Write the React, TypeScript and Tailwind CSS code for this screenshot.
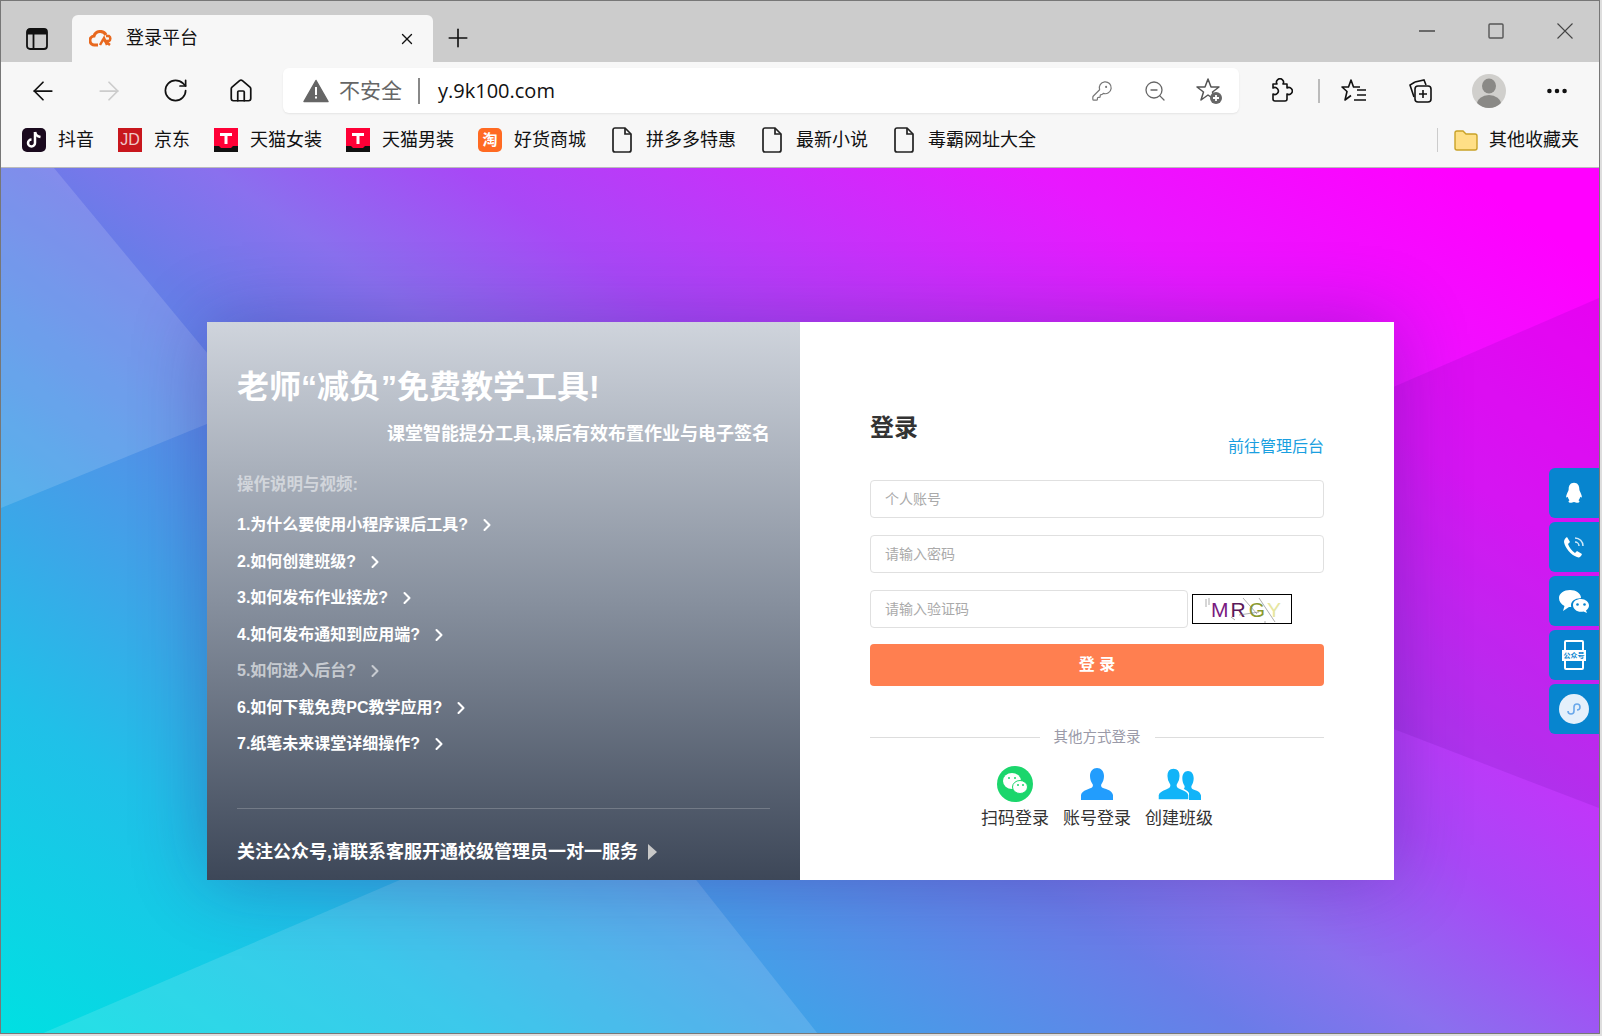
import React from "react";
import { ArrowLeft, ArrowRight, RotateCw, Home, Plus, X, KeyRound, ZoomOut, MoreHorizontal, ChevronRight } from "lucide-react";

const cjk = "font-['Liberation_Sans','Noto_Sans_CJK_SC',sans-serif]";

function Bm({ icon, label, w }: { icon: React.ReactNode; label: string; w: string }) {
  return (
    <div className={`flex items-center gap-[12px] ${w}`}>
      <span className="flex h-[26px] w-[24px] items-center justify-center">{icon}</span>
      <span className="text-[18px] leading-none text-[#111]">{label}</span>
    </div>
  );
}

function Tmall() {
  return (
    <svg width="24" height="24" viewBox="0 0 24 24">
      <rect width="24" height="24" fill="#ff0036" />
      <path d="M0 18h5l2 2h10l2-2h5v6H0z" fill="#111" />
      <path d="M6 5h12v3h-4.500v8h-3V8H6z" fill="#fff" />
    </svg>
  );
}
function Doc() {
  return (
    <svg width="24" height="26" viewBox="0 0 24 26" fill="none" stroke="#222" strokeWidth="1.700">
      <path d="M3 3a2 2 0 0 1 2-2h10l6 6v16a2 2 0 0 1-2 2H5a2 2 0 0 1-2-2z" />
      <path d="M15 1v6h6" />
    </svg>
  );
}

const links = [
  "1.为什么要使用小程序课后工具?",
  "2.如何创建班级?",
  "3.如何发布作业接龙?",
  "4.如何发布通知到应用端?",
  "5.如何进入后台?",
  "6.如何下载免费PC教学应用?",
  "7.纸笔未来课堂详细操作?",
];

function Person({ color, w = 32, h = 32, outline = false }: { color: string; w?: number; h?: number; outline?: boolean }) {
  return (
    <svg width={w} height={h} viewBox="0 0 32 32" fill={color} stroke={outline ? "#fff" : "none"} strokeWidth={outline ? 1.500 : 0} preserveAspectRatio="none">
      <path d="M16 0c4 0 7 3 7 8 0 3-1 6-2.500 8-.7 1-.5 2.500.5 3.500 2 1.500 10 2 11 7.500v5H0v-5c1-5 9-6 11-7.500 1-1 1.200-2.500.5-3.500C10 14 9 11 9 8c0-5 3-8 7-8z" />
    </svg>
  );
}

function SideBtn({ children }: { children: React.ReactNode }) {
  return <div className="flex h-[50px] w-[50px] items-center justify-center rounded-l-[6px] bg-[#0785cf]">{children}</div>;
}

export default function App() {
  return (
    <div className="h-[1036px] w-[1602px] bg-[#dedede]">
      <div className={`flex h-[1034px] w-[1600px] flex-col overflow-hidden border border-[#777] bg-[#ccc] ${cjk}`}>
        {/* tab strip */}
        <div className="flex h-[61px] shrink-0 items-end bg-[#cccccc]">
          <div className="flex h-[47px] w-[71px] items-center justify-center">
            <svg width="22" height="22" viewBox="0 0 22 22" fill="none" stroke="#111" strokeWidth="1.800">
              <rect x="1" y="1" width="20" height="20" rx="3" />
              <path d="M1 4h20" strokeWidth="5" />
              <path d="M7.500 6v15" />
            </svg>
          </div>
          <div className="flex h-[47px] w-[361px] items-center rounded-t-[6px] bg-[#f7f7f7] pr-[17px] pl-[17px]">
            <svg width="24" height="18" viewBox="0 0 24 18" fill="none" stroke="#e8681e" strokeWidth="3">
              <path d="M9 15H6a4.500 4.500 0 0 1-1-9 6.500 6.500 0 0 1 12-1" />
              <path d="M11 15l4-7 3 7" strokeWidth="2.500" />
              <path d="M17 6h3a3 3 0 0 1 0 5h-4l5 4" strokeWidth="2.500" />
            </svg>
            <span className="mb-[1px] ml-[13px] flex-1 text-[18px] leading-none text-[#111]">登录平台</span>
            <X size={18} strokeWidth={1.800} className="text-[#111]" />
          </div>
          <div className="flex h-[47px] w-[50px] items-center justify-center pb-[2px]">
            <Plus size={30} strokeWidth={1.300} className="text-[#111]" />
          </div>
          <div className="flex-1" />
          <div className="flex h-[61px] items-start pt-[22px] text-[#333]">
            <div className="flex w-[69px] justify-center">
              <svg width="16" height="16" viewBox="0 0 16 16" stroke="#333" strokeWidth="1.300"><path d="M0 8h16" /></svg>
            </div>
            <div className="flex w-[69px] justify-center">
              <svg width="16" height="16" viewBox="0 0 16 16" fill="none" stroke="#555" strokeWidth="1.400"><rect x="1" y="1" width="14" height="14" rx="1" /></svg>
            </div>
            <div className="flex w-[69px] justify-center">
              <svg width="16" height="16" viewBox="0 0 16 16" stroke="#444" strokeWidth="1.100"><path d="M0.500 0.500l15 15M15.500 0.500l-15 15" /></svg>
            </div>
          </div>
        </div>

        {/* toolbar */}
        <div className="flex h-[57px] shrink-0 items-center bg-[#f7f7f7]">
          <div className="flex w-[282px] items-center text-[#111]">
            <div className="flex w-[84px] justify-center"><ArrowLeft size={30} strokeWidth={1.400} /></div>
            <div className="flex w-[48px] justify-center"><ArrowRight size={30} strokeWidth={1.400} className="text-[#ccc]" /></div>
            <div className="flex w-[84px] justify-center"><RotateCw size={27} strokeWidth={1.500} /></div>
            <div className="flex w-[48px] justify-center"><Home size={26} strokeWidth={1.600} /></div>
          </div>
          <div className="flex h-[45px] w-[956px] items-center rounded-[6px] bg-white pr-[16px] pl-[20px] shadow-[0_1px_2px_rgba(0,0,0,0.08)]">
            <svg width="26" height="24" viewBox="0 0 26 24">
              <path d="M13 1.500l12 21H1z" fill="#666" stroke="#666" strokeWidth="1.500" strokeLinejoin="round" />
              <path d="M12 8h2v8h-2zM12 17.500h2v2h-2z" fill="#fff" />
            </svg>
            <span className="ml-[10px] text-[21px] leading-none text-[#666]">不安全</span>
            <span className="mr-[18px] ml-[16px] h-[26px] w-[2px] bg-[#888]" />
            <span className="font-['Open_Sans',sans-serif] text-[20px] leading-none text-[#111]">y.9k100.com</span>
            <div className="flex-1" />
            <KeyRound size={22} strokeWidth={1.300} className="mr-[30px] text-[#777]" />
            <ZoomOut size={24} strokeWidth={1.300} className="mr-[28px] text-[#666]" />
            <svg width="28" height="30" viewBox="0 0 28 30" fill="none" stroke="#555" strokeWidth="1.500">
              <path d="M13 3l3 8h8l-6.500 5 2.500 8-7-5-7 5 2.500-8L2 11h8z" strokeLinejoin="round" />
              <circle cx="21" cy="22" r="6" fill="#666" stroke="none" />
              <path d="M21 19v6M18 22h6" stroke="#fff" strokeWidth="1.800" />
            </svg>
          </div>
          <div className="flex flex-1 items-center text-[#111]">
            <div className="flex w-[79px] justify-center pl-[3px]">
              <svg width="26" height="26" viewBox="0 0 26 26" fill="none" stroke="#111" strokeWidth="1.600">
                <path d="M6 6h4a3.500 3.500 0 1 1 6 0h4v4a3.500 3.500 0 1 1 0 6v5a2 2 0 0 1-2 2H8a2 2 0 0 1-2-2v-5a3.500 3.500 0 1 0 0-6z" strokeLinejoin="round" />
              </svg>
            </div>
            <span className="h-[24px] w-[2px] bg-[#bbb]" />
            <div className="flex w-[68px] justify-center">
              <svg width="28" height="28" viewBox="0 0 28 28" fill="none" stroke="#111" strokeWidth="1.600">
                <path d="M20 10h-6.500L11 3 8.500 10H2l5 4.500L5 23l6-4.500" strokeLinejoin="round" />
                <path d="M17 13h9M17 18h9M14 23h12" />
              </svg>
            </div>
            <div className="flex w-[64px] justify-center">
              <svg width="28" height="28" viewBox="0 0 28 28" fill="none" stroke="#111" strokeWidth="1.600">
                <path d="M9 5l9-2 2 5" />
                <path d="M8 20L4 8l5-3" />
                <rect x="9" y="9" width="16" height="16" rx="3" />
                <path d="M17 13v8M13 17h8" />
              </svg>
            </div>
            <div className="ml-[20px] flex h-[34px] w-[34px] items-center justify-center overflow-hidden rounded-full bg-[#d0cfcc]">
              <svg width="34" height="34" viewBox="0 0 34 34" fill="#8a8986">
                <ellipse cx="17" cy="12" rx="7" ry="7.500" />
                <ellipse cx="17" cy="30" rx="12" ry="9" />
              </svg>
            </div>
            <MoreHorizontal size={26} strokeWidth={2.200} className="ml-[38px]" />
          </div>
        </div>

        {/* bookmarks */}
        <div className="flex h-[48px] shrink-0 items-center bg-[#f7f7f7] pb-[7px] pl-[21px]">
          <Bm w="w-[96px]" label="抖音" icon={<span className="flex h-[24px] w-[24px] items-center justify-center rounded-[5px] bg-[#1a0a1e]"><svg width="16" height="18" viewBox="0 0 16 18" fill="none" stroke="#fff" strokeWidth="2.500"><path d="M9 1v11a3.500 3.500 0 1 1-3.500-3.500" /><path d="M9 1c.5 3 2.500 4.500 5.500 5" /></svg></span>} />
          <Bm w="w-[96px]" label="京东" icon={<span className="flex h-[24px] w-[24px] items-center justify-center bg-[#c8161d] font-['Liberation_Sans',sans-serif] text-[16px] leading-none text-[#f0c8c8]">JD</span>} />
          <Bm w="w-[132px]" label="天猫女装" icon={<Tmall />} />
          <Bm w="w-[132px]" label="天猫男装" icon={<Tmall />} />
          <Bm w="w-[132px]" label="好货商城" icon={<span className="flex h-[24px] w-[24px] items-center justify-center rounded-[5px] bg-[#ff6a22] text-[15px] font-bold leading-none text-white">淘</span>} />
          <Bm w="w-[150px]" label="拼多多特惠" icon={<Doc />} />
          <Bm w="w-[132px]" label="最新小说" icon={<Doc />} />
          <Bm w="w-[150px]" label="毒霸网址大全" icon={<Doc />} />
          <div className="flex-1" />
          <span className="h-[24px] w-[1px] bg-[#ccc]" />
          <div className="mr-[20px] ml-[15px] flex items-center gap-[10px]">
            <svg width="26" height="24" viewBox="0 0 26 24" fill="#ffdf86" stroke="#c9a227" strokeWidth="1.400">
              <path d="M2 5a2 2 0 0 1 2-2h6l3 3h9a2 2 0 0 1 2 2v12a2 2 0 0 1-2 2H4a2 2 0 0 1-2-2z" />
            </svg>
            <span className="text-[18px] leading-none text-[#111]">其他收藏夹</span>
          </div>
        </div>

        {/* page */}
        <div className="relative flex-1 overflow-hidden border-t-[1px] border-[#bbb] bg-[linear-gradient(35deg,#00e0e2_0%,#20c0e8_17%,#3aa8e8_26%,#6a7ce8_44%,#8a70ee_51%,#a848f6_60%,#e818ff_80%,#ff00ff_95%)]">
          <svg className="absolute inset-0" width="1598" height="866" viewBox="0 0 1598 866" preserveAspectRatio="none">
            <polygon points="0,0 53,0 250,238 0,340" fill="#fff" opacity="0.14" />
            <polygon points="40,866 620,617 817,866" fill="#fff" opacity="0.13" />
            <polygon points="1390,220 1598,130 1598,640 1390,560" fill="#500090" opacity="0.12" />
          </svg>

          <div className="relative mt-[154px] ml-[206px] flex h-[558px] w-[1187px] shadow-[0_0_70px_rgba(40,20,120,0.3)]">
            {/* left */}
            <div className="flex w-[593px] flex-col bg-[linear-gradient(to_bottom,#cfd4dc,#87909e_50%,#3d4758)] px-[30px] text-white">
              <h1 className="mt-[45px] text-[32px] leading-[40px] font-bold">老师“减负”免费教学工具!</h1>
              <p className="mt-[15px] text-right text-[18px] leading-[24px] font-bold">课堂智能提分工具,课后有效布置作业与电子签名</p>
              <p className="mt-[26px] text-[16.500px] leading-[24px] font-bold text-white/50">操作说明与视频:</p>
              <ul className="mt-[17px] flex flex-col gap-[12.500px]">
                {links.map((t, i) => (
                  <li key={t} className={`flex h-[24px] items-center text-[16px] leading-[24px] font-bold ${i === 4 ? "text-white/60" : "text-white"}`}>
                    {t}
                    <ChevronRight size={20} strokeWidth={2.500} className="ml-[9px]" />
                  </li>
                ))}
              </ul>
              <div className="mt-[52px] h-[1px] bg-white/20" />
              <div className="mt-[30px] flex items-center text-[18px] leading-[26px] font-bold">
                关注公众号,请联系客服开通校级管理员一对一服务
                <span className="ml-[10px] h-0 w-0 border-y-[8px] border-l-[9px] border-y-transparent border-l-[#c8c8c8]" />
              </div>
            </div>
            {/* right */}
            <div className="flex w-[594px] flex-col bg-white pr-[70px] pl-[70px]">
              <div className="mt-[91px] flex h-[53px] items-start justify-between">
                <h2 className="text-[24px] leading-[30px] font-bold text-[#333]">登录</h2>
                <a className="mt-[22px] text-[16px] leading-[24px] text-[#1a9fe0]">前往管理后台</a>
              </div>
              <div className="mt-[14px] flex h-[38px] items-center rounded-[4px] border border-[#e0e0e0] px-[14px] text-[14px] text-[#aaa]">个人账号</div>
              <div className="mt-[17px] flex h-[38px] items-center rounded-[4px] border border-[#e0e0e0] px-[14px] text-[14px] text-[#aaa]">请输入密码</div>
              <div className="mt-[17px] flex items-center">
                <div className="flex h-[38px] w-[318px] items-center rounded-[4px] border border-[#e0e0e0] px-[14px] text-[14px] text-[#aaa]">请输入验证码</div>
                <div className="relative ml-[4px] flex h-[30px] w-[100px] items-center border border-black pl-[18px] text-[21px] leading-none">
                  <span className="text-[#7a1a80]">M</span>
                  <span className="ml-[2px] text-[#5a1a5a]">R</span>
                  <span className="ml-[3px] text-[#8a9a30]">G</span>
                  <span className="ml-[2px] text-[#e6e6a0]">Y</span>
                  <svg className="absolute inset-0" width="98" height="28" viewBox="0 0 98 28" fill="none" stroke="#777" strokeWidth="0.600">
                    <path d="M13 4v8M16 3v7M50 3l14 16M66 3l16 24M46 20l20-3M38 22l4 3M72 26v2" />
                  </svg>
                </div>
              </div>
              <button className="mt-[16px] h-[42px] rounded-[4px] bg-[#ff7f50] text-[16px] font-bold text-white">登 录</button>
              <div className="mt-[41px] flex items-center">
                <span className="h-[1px] flex-1 bg-[#ddd]" />
                <span className="mx-[14px] text-[14.500px] leading-[20px] text-[#9a9aa8]">其他方式登录</span>
                <span className="h-[1px] flex-1 bg-[#ddd]" />
              </div>
              <div className="mt-[19px] flex justify-center gap-[14px]">
                <div className="flex w-[68px] flex-col items-center">
                  <svg width="36" height="36" viewBox="0 0 36 36">
                    <circle cx="18" cy="18" r="18" fill="#1bd66c" />
                    <ellipse cx="15" cy="15" rx="9" ry="8" fill="#fff" />
                    <ellipse cx="23" cy="21" rx="7.500" ry="6.500" fill="#fff" stroke="#1bd66c" />
                    <circle cx="12" cy="12" r="1" fill="#1bd66c" />
                    <circle cx="18" cy="12" r="1" fill="#1bd66c" />
                    <circle cx="21" cy="19" r="1" fill="#1bd66c" />
                    <circle cx="26" cy="19" r="1" fill="#1bd66c" />
                  </svg>
                  <span className="mt-[4px] text-[17px] leading-[26px] text-[#333]">扫码登录</span>
                </div>
                <div className="flex w-[68px] flex-col items-center">
                  <div className="flex h-[36px] items-end pb-[2px]"><Person color="#229dfd" /></div>
                  <span className="mt-[4px] text-[17px] leading-[26px] text-[#333]">账号登录</span>
                </div>
                <div className="flex w-[68px] flex-col items-center">
                  <div className="flex h-[36px] items-end pb-[2px]">
                    <div className="relative z-10 flex"><Person color="#11b4f8" w={31} h={32} outline /></div>
                    <div className="-ml-[14px] flex"><Person color="#11b4f8" w={26} h={29} /></div>
                  </div>
                  <span className="mt-[4px] text-[17px] leading-[26px] text-[#333]">创建班级</span>
                </div>
              </div>
            </div>
          </div>

          {/* floating side buttons */}
          <div className="absolute top-[300px] right-0 flex flex-col gap-[4px]">
            <SideBtn>
              <svg width="18" height="22" viewBox="0 0 22 26" fill="#fff" preserveAspectRatio="none"><path d="M11 1c4.500 0 6.500 3.500 6.500 7.500 0 2 2.500 5 3 8 .3 2-.8 2.500-2 1-.3 2-1 3-2 4 2 .8 1.500 3-1 3-2 0-3-1-4.500-1s-2.500 1-4.500 1c-2.500 0-3-2.200-1-3-1-1-1.700-2-2-4-1.200 1.500-2.300 1-2-1 .5-3 3-6 3-8C4.500 4.500 6.500 1 11 1z" /></svg>
            </SideBtn>
            <SideBtn>
              <svg width="24" height="24" viewBox="0 0 24 24" fill="none"><path d="M5 2l3 5-2 2c1 3 4 7 7 9l2-2 5 3c-1 3-3 4-5 3C9 20 3 13 2 7c0-2 1-4 3-5z" fill="#fff" /><path d="M13 3a8 8 0 0 1 8 8M13 7a4 4 0 0 1 4 4" stroke="#cfe8f8" strokeWidth="1.500" /></svg>
            </SideBtn>
            <SideBtn>
              <svg width="32" height="24" viewBox="0 0 32 24" fill="#fff">
                <path d="M12 1c6 0 11 3.500 11 8l-1 .2c-5 0-9 3-9 7 0 .7.100 1.300.3 1.800H12l-1 0-6 4 1.500-5C3 15 1 12.500 1 9c0-4.500 5-8 11-8z" />
                <path d="M23 10c4.500 0 8 3 8 6.500 0 2-1.200 3.800-3 5l1 2.500-3.500-1.500c-.8.200-1.600.3-2.500.3-4.500 0-8-3-8-6.800S18.500 10 23 10z" />
                <circle cx="19.500" cy="15.500" r="1.300" fill="#0785cf" /><circle cx="26.500" cy="15.500" r="1.300" fill="#0785cf" />
              </svg>
            </SideBtn>
            <SideBtn>
              <div className="relative flex h-[30px] w-[20px] items-center justify-center rounded-[2px] border-2 border-white">
                <span className="absolute -left-[4px] w-[24px] bg-white text-center text-[7px] leading-[11px] font-bold whitespace-nowrap text-[#0785cf]">公众号</span>
              </div>
            </SideBtn>
            <SideBtn>
              <span className="flex h-[30px] w-[30px] items-center justify-center rounded-full bg-[#e4f0fb]">
                <svg width="16" height="16" viewBox="0 0 16 16" fill="none" stroke="#6aa8ea" strokeWidth="1.600"><path d="M2 10a3 3 0 1 0 6 0V6a3 3 0 1 1 3 3" /></svg>
              </span>
            </SideBtn>
          </div>
        </div>
      </div>
    </div>
  );
}
